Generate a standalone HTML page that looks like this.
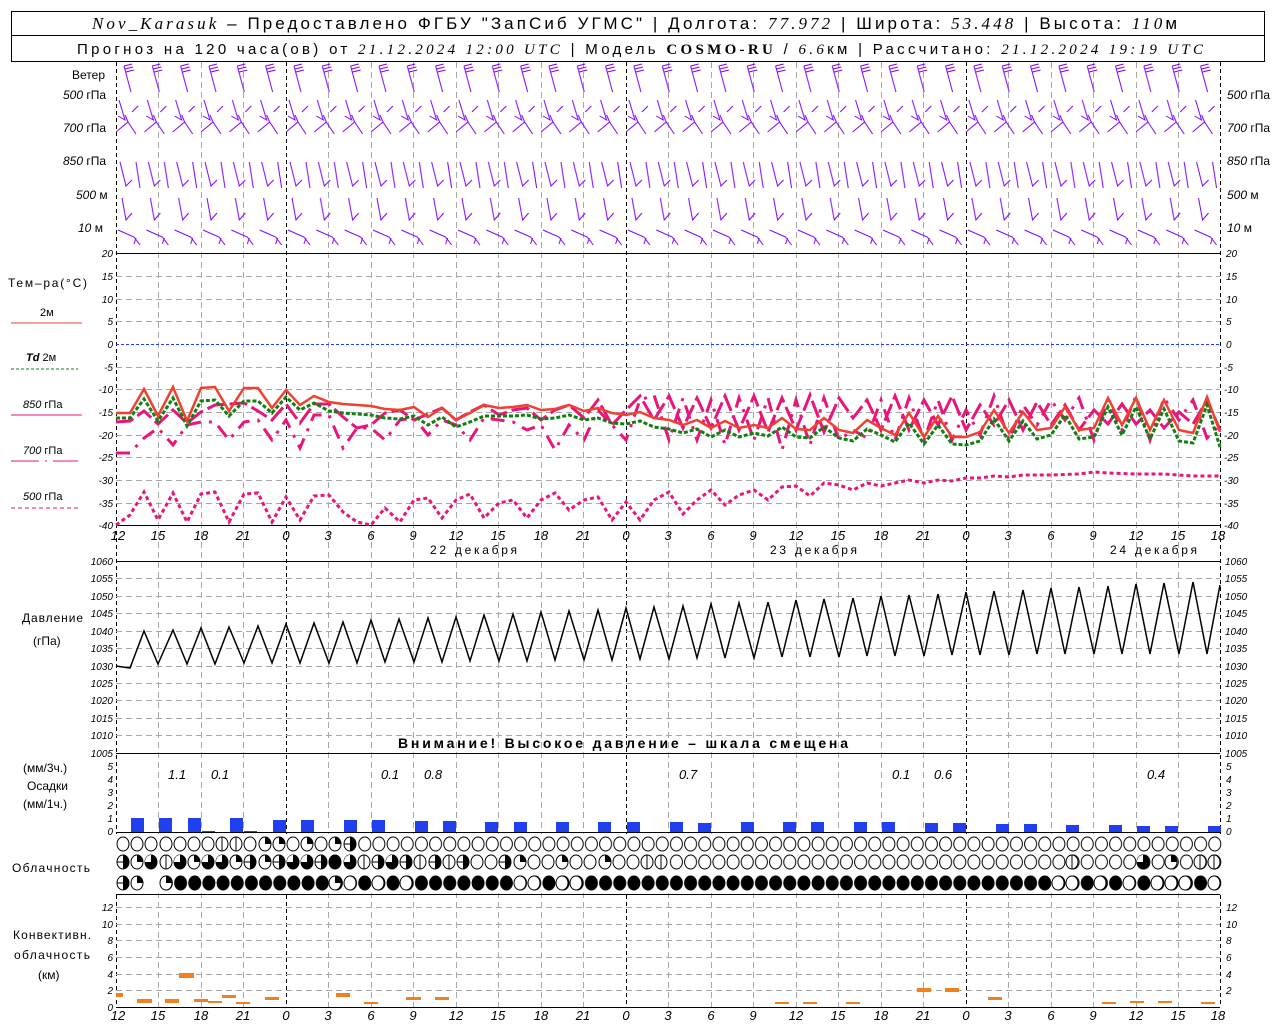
<!DOCTYPE html>
<html><head><meta charset="utf-8"><style>
html,body{margin:0;padding:0;background:#fff;}
svg{display:block;font-family:"Liberation Sans",sans-serif;}
.t{font-size:12px;fill:#000}
.ax{font-size:10px;font-style:italic;fill:#000}
.g{stroke:#a8a8a8;stroke-width:1;stroke-dasharray:6 4;fill:none}
.k{stroke:#000;stroke-width:1;stroke-dasharray:4 3;fill:none}
</style></head><body>
<svg width="1280" height="1024" viewBox="0 0 1280 1024" xmlns="http://www.w3.org/2000/svg">
<defs>
<pattern id="wind" patternUnits="userSpaceOnUse" x="116" y="62" width="28.33" height="190">
<g stroke="#8000ff" stroke-width="1" fill="none">
<path d="M8 4 L15 30 M8 4 L16 2 M9 7 L17 5 M10 10 L18 8"/>
<path d="M3 38 L9 58 L2 54 M16 50 L22 44"/>
<path d="M0 70 L12 60 L20 72 M12 60 L9 53"/>
<path d="M4 100 L10 124 L16 118 M20 100 L24 126"/>
<path d="M6 136 L10 158 L16 151"/>
<path d="M2 168 L18 175 L24 183 M20 176 L18 182"/>
</g></pattern>
<g id="ce"><ellipse rx="6" ry="7" fill="#fff" stroke="#000"/></g>
<g id="cf"><ellipse rx="6" ry="7" fill="#000" stroke="#000"/></g>
<g id="ch"><ellipse rx="6" ry="7" fill="#fff" stroke="#000"/><path d="M0 -7 A6 7 0 0 1 0 7 Z" fill="#000"/><line x1="-6" y1="0" x2="6" y2="0" stroke="#000"/></g>
<g id="cq"><ellipse rx="6" ry="7" fill="#fff" stroke="#000"/><path d="M0 0 L0 -7 A6 7 0 0 1 6 0 Z" fill="#000"/></g>
<g id="ct"><ellipse rx="6" ry="7" fill="#000" stroke="#000"/><path d="M0 0 L-6 0 A6 7 0 0 1 0 -7 Z" fill="#fff"/></g>
<g id="cv"><ellipse rx="6" ry="7" fill="#fff" stroke="#000"/><line x1="0" y1="-7" x2="0" y2="7" stroke="#000"/></g>
<pattern id="pe" patternUnits="userSpaceOnUse" x="116.83" y="836" width="14.167" height="16"><ellipse cx="7.08" cy="8" rx="6" ry="7" fill="#fff" stroke="#000"/></pattern>
<pattern id="pf" patternUnits="userSpaceOnUse" x="116.83" y="875" width="14.167" height="16"><ellipse cx="7.08" cy="8" rx="6" ry="7" fill="#000" stroke="#000"/></pattern>
<pattern id="pe2" patternUnits="userSpaceOnUse" x="116.83" y="854" width="14.167" height="16"><ellipse cx="7.08" cy="8" rx="6" ry="7" fill="#fff" stroke="#000"/></pattern>
</defs>

<!-- header -->
<rect x="11.5" y="11.5" width="1253" height="24" fill="none" stroke="#000"/>
<rect x="11.5" y="35.5" width="1253" height="26" fill="none" stroke="#000"/>
<text x="92" y="29" font-size="17" fill="#000" textLength="1085" lengthAdjust="spacing"><tspan font-family="Liberation Serif" font-style="italic">Nov_Karasuk</tspan> – Предоставлено ФГБУ "ЗапСиб УГМС" | Долгота: <tspan font-family="Liberation Serif" font-style="italic">77.972</tspan> | Широта: <tspan font-family="Liberation Serif" font-style="italic">53.448</tspan> | Высота: <tspan font-family="Liberation Serif" font-style="italic">110</tspan>м</text>
<text x="77" y="54" font-size="15" fill="#000" textLength="1126" lengthAdjust="spacing">Прогноз на 120 часа(ов) от <tspan font-family="Liberation Serif" font-style="italic">21.12.2024 12:00 UTC</tspan>  | Модель <tspan font-family="Liberation Serif" font-weight="bold">COSMO-RU</tspan> / <tspan font-family="Liberation Serif" font-style="italic">6.6</tspan>км | Рассчитано: <tspan font-family="Liberation Serif" font-style="italic">21.12.2024 19:19 UTC</tspan></text>

<!-- vertical grids -->
<path class="g" d="M158.5 62V1007M201.5 62V1007M243.5 62V1007M328.5 62V1007M371.5 62V1007M413.5 62V1007M456.5 62V1007M498.5 62V1007M541.5 62V1007M583.5 62V1007M668.5 62V1007M711.5 62V1007M753.5 62V1007M796.5 62V1007M838.5 62V1007M881.5 62V1007M923.5 62V1007M1008.5 62V1007M1051.5 62V1007M1093.5 62V1007M1136.5 62V1007M1178.5 62V1007"/>
<path class="k" d="M286.5 62V1007M626.5 62V1007M966.5 62V1007M116.5 62V1007M1220.5 62V1007"/>
<rect x="116" y="62" width="1104" height="190" fill="url(#wind)"/>

<!-- wind labels -->
<g class="t" font-size="11">
<text x="72" y="79">Ветер</text>
<text x="63" y="99"><tspan font-style="italic">500</tspan> гПа</text>
<text x="63" y="132"><tspan font-style="italic">700</tspan> гПа</text>
<text x="63" y="165"><tspan font-style="italic">850</tspan> гПа</text>
<text x="76" y="199"><tspan font-style="italic">500</tspan> м</text>
<text x="78" y="232"><tspan font-style="italic">10</tspan>  м</text>
<text x="1227" y="99"><tspan font-style="italic">500</tspan> гПа</text>
<text x="1227" y="132"><tspan font-style="italic">700</tspan> гПа</text>
<text x="1227" y="165"><tspan font-style="italic">850</tspan> гПа</text>
<text x="1227" y="199"><tspan font-style="italic">500</tspan> м</text>
<text x="1227" y="232"><tspan font-style="italic">10</tspan>  м</text>
</g>

<!-- temperature panel -->
<line x1="116" y1="253.5" x2="1220" y2="253.5" stroke="#000"/>
<path class="g" d="M116 276.5H1220M116 299.5H1220M116 321.5H1220M116 367.5H1220M116 389.5H1220M116 412.5H1220M116 435.5H1220M116 457.5H1220M116 480.5H1220M116 503.5H1220"/>
<line x1="116" y1="344.5" x2="1220" y2="344.5" stroke="#2040ff" stroke-dasharray="3 2"/>
<line x1="116" y1="525.5" x2="1220" y2="525.5" stroke="#000"/>
<g class="ax" text-anchor="end">
<text x="113" y="257">20</text><text x="113" y="280">15</text><text x="113" y="303">10</text><text x="113" y="325">5</text><text x="113" y="348">0</text><text x="113" y="371">-5</text><text x="113" y="393">-10</text><text x="113" y="416">-15</text><text x="113" y="439">-20</text><text x="113" y="461">-25</text><text x="113" y="484">-30</text><text x="113" y="507">-35</text><text x="113" y="529">-40</text>
</g>
<g class="ax">
<text x="1226" y="257">20</text><text x="1226" y="280">15</text><text x="1226" y="303">10</text><text x="1226" y="325">5</text><text x="1226" y="348">0</text><text x="1224" y="371">-5</text><text x="1224" y="393">-10</text><text x="1224" y="416">-15</text><text x="1224" y="439">-20</text><text x="1224" y="461">-25</text><text x="1224" y="484">-30</text><text x="1224" y="507">-35</text><text x="1224" y="529">-40</text>
</g>
<g class="t">
<text x="8" y="287" textLength="79" lengthAdjust="spacing">Тем–ра(°С)</text>
<text x="40" y="316" font-size="11">2м</text>
<line x1="11" y1="323" x2="82" y2="323" stroke="#f04030"/>
<text x="26" y="361" font-size="11"><tspan font-style="italic" font-weight="bold">Td</tspan>  2м</text>
<line x1="11" y1="369" x2="78" y2="369" stroke="#108010" stroke-dasharray="3 2"/>
<text x="23" y="408" font-size="11"><tspan font-style="italic">850</tspan> гПа</text>
<line x1="11" y1="415" x2="82" y2="415" stroke="#e8157a"/>
<text x="23" y="454" font-size="11"><tspan font-style="italic">700</tspan> гПа</text>
<line x1="11" y1="461" x2="78" y2="461" stroke="#e8157a" stroke-dasharray="28 6 2 6"/>
<text x="23" y="500" font-size="11"><tspan font-style="italic">500</tspan> гПа</text>
<line x1="11" y1="508" x2="78" y2="508" stroke="#e8157a" stroke-dasharray="4 3"/>
</g>
<polyline fill="none" stroke="#e8157a" stroke-width="3" stroke-dasharray="4 3" points="116,525 130,515 144,492 158,520 173,493 187,522 201,494 215,492 229,522 244,494 258,493 272,522 286,497 300,520 314,496 329,495 343,512 357,522 371,525 385,508 400,522 414,500 428,498 442,518 456,500 470,494 484,518 499,503 513,500 527,518 541,500 555,493 569,510 584,500 598,497 612,520 626,502 640,520 654,500 669,492 683,514 697,500 711,490 725,505 739,495 754,490 768,500 782,487 796,486 810,496 824,483 839,485 853,490 867,483 881,486 895,483 909,480 924,483 938,480 952,481 966,478 980,478 994,476 1009,477 1023,475 1051,475 1079,474 1094,472 1108,473 1136,474 1164,474 1193,476 1220,476"/>
<polyline fill="none" stroke="#e8157a" stroke-width="3" stroke-dasharray="14 8 3 8" points="116,453 130,453 144,438 158,428 173,445 187,425 201,422 215,422 229,440 244,422 258,420 272,440 286,420 300,448 314,415 329,415 343,448 357,428 371,428 385,440 400,420 414,418 428,435 442,420 456,425 470,440 484,418 499,420 513,422 527,430 541,425 555,450 569,425 584,440 598,410 612,425 626,440 640,400 654,395 669,440 683,398 697,440 711,400 725,445 739,398 754,440 768,398 782,450 796,400 810,445 824,398 839,440 853,430 867,438 881,400 895,440 909,398 924,440 938,400 952,440 966,410 980,435 994,396 1009,440 1023,405 1037,425 1051,400 1065,420 1079,398 1094,440 1108,400 1122,430 1136,396 1150,440 1164,398 1179,420 1193,400 1207,438 1220,425"/>
<polyline fill="none" stroke="#e8157a" stroke-width="3" stroke-dasharray="18 5" points="116,422 130,421 144,411 158,424 173,410 187,423 201,412 215,405 229,404 244,403 258,411 272,420 286,404 300,423 314,404 329,404 343,417 357,428 371,425 385,413 400,410 414,420 428,414 442,408 456,420 470,412 484,405 499,415 513,410 527,408 541,420 555,410 569,405 584,418 598,400 612,425 626,410 640,396 654,420 669,396 683,428 697,398 711,428 725,396 739,430 754,396 768,432 782,398 796,430 810,395 824,432 839,398 853,418 867,400 881,430 895,396 909,430 924,400 938,425 952,396 966,430 980,405 994,425 1009,400 1023,430 1037,402 1051,425 1065,405 1079,430 1094,410 1108,424 1122,404 1136,424 1150,410 1164,428 1179,412 1193,424 1207,400 1220,430"/>
<polyline fill="none" stroke="#108010" stroke-width="3" stroke-dasharray="4 2" transform="translate(0,5)" points="116,413 130,413 144,394 158,416 173,393 187,421 201,396 215,395 229,411 244,396 258,396 272,408 286,392 300,405 314,398 329,406 343,408 357,409 371,410 385,413 400,414 414,411 428,420 442,412 456,422 470,417 484,411 499,411 513,411 527,410 541,414 555,413 569,410 584,415 598,413 612,418 626,419 640,416 654,422 669,424 683,428 697,424 711,432 725,425 739,432 754,428 768,431 782,422 796,432 810,433 824,422 839,433 853,436 867,424 881,430 895,437 909,418 924,439 938,420 952,439 966,440 980,436 994,414 1009,436 1023,416 1037,434 1051,430 1065,410 1079,434 1094,432 1108,402 1122,430 1136,402 1150,434 1164,404 1179,436 1193,438 1207,400 1220,442"/>
<polyline fill="none" stroke="#f04030" stroke-width="2.5" points="116,413 130,413 144,389 158,416 173,387 187,421 201,388 215,387 229,411 244,388 258,388 272,408 286,390 300,405 314,396 329,402 343,404 357,405 371,406 385,409 400,410 414,407 428,417 442,408 456,420 470,413 484,405 499,408 513,407 527,405 541,410 555,409 569,405 584,411 598,408 612,413 626,415 640,412 654,418 669,420 683,425 697,420 711,428 725,421 739,428 754,425 768,428 782,418 796,429 810,430 824,418 839,430 853,433 867,420 881,428 895,435 909,413 924,437 938,416 952,437 966,437 980,432 994,410 1009,433 1023,412 1037,430 1051,428 1065,407 1079,430 1094,428 1108,398 1122,425 1136,398 1150,430 1164,400 1179,430 1193,433 1207,397 1220,432"/>
<g font-size="13" font-style="italic" fill="#000" text-anchor="middle">
<text x="118" y="540">12</text><text x="158" y="540">15</text><text x="201" y="540">18</text><text x="243" y="540">21</text><text x="286" y="540">0</text><text x="328" y="540">3</text><text x="371" y="540">6</text><text x="413" y="540">9</text><text x="456" y="540">12</text><text x="498" y="540">15</text><text x="541" y="540">18</text><text x="583" y="540">21</text><text x="626" y="540">0</text><text x="668" y="540">3</text><text x="711" y="540">6</text><text x="753" y="540">9</text><text x="796" y="540">12</text><text x="838" y="540">15</text><text x="881" y="540">18</text><text x="923" y="540">21</text><text x="966" y="540">0</text><text x="1008" y="540">3</text><text x="1051" y="540">6</text><text x="1093" y="540">9</text><text x="1136" y="540">12</text><text x="1178" y="540">15</text><text x="1218" y="540">18</text>
</g>
<g class="t" font-size="12"><text x="430" y="554" textLength="87" lengthAdjust="spacing">22 декабря</text><text x="770" y="554" textLength="87" lengthAdjust="spacing">23 декабря</text><text x="1110" y="554" textLength="87" lengthAdjust="spacing">24 декабря</text></g>

<!-- pressure panel -->
<line x1="116" y1="561.5" x2="1220" y2="561.5" stroke="#000"/>
<path class="g" d="M116 578.5H1220M116 596.5H1220M116 613.5H1220M116 631.5H1220M116 648.5H1220M116 666.5H1220M116 683.5H1220M116 700.5H1220M116 718.5H1220M116 735.5H1220"/>
<line x1="116" y1="753.5" x2="1220" y2="753.5" stroke="#000"/>
<g class="ax" font-size="9" text-anchor="end">
<text x="113" y="565">1060</text><text x="113" y="582">1055</text><text x="113" y="600">1050</text><text x="113" y="617">1045</text><text x="113" y="635">1040</text><text x="113" y="652">1035</text><text x="113" y="670">1030</text><text x="113" y="687">1025</text><text x="113" y="704">1020</text><text x="113" y="722">1015</text><text x="113" y="739">1010</text><text x="113" y="757">1005</text>
</g>
<g class="ax" font-size="9">
<text x="1225" y="565">1060</text><text x="1225" y="582">1055</text><text x="1225" y="600">1050</text><text x="1225" y="617">1045</text><text x="1225" y="635">1040</text><text x="1225" y="652">1035</text><text x="1225" y="670">1030</text><text x="1225" y="687">1025</text><text x="1225" y="704">1020</text><text x="1225" y="722">1015</text><text x="1225" y="739">1010</text><text x="1225" y="757">1005</text>
</g>
<text class="t" x="22" y="622" textLength="61" lengthAdjust="spacing">Давление</text>
<text class="t" x="33" y="645">(гПа)</text>
<polyline fill="none" stroke="#000" stroke-width="1.5" points="116,666 130,668 144,631 158,664 173,630 187,664 201,628 215,664 229,627 244,663 258,626 272,663 286,624 300,663 314,623 329,663 343,622 357,663 371,620 385,662 399,619 414,662 428,618 442,662 456,617 470,661 484,615 499,661 513,614 527,661 541,612 555,660 569,611 584,660 598,610 612,660 626,608 640,659 654,607 669,659 683,606 697,658 711,604 725,658 739,603 754,658 768,602 782,657 796,600 810,657 824,599 839,657 853,598 867,656 881,596 895,656 909,595 924,656 938,594 952,655 966,592 980,655 994,591 1009,655 1023,590 1037,654 1051,588 1065,654 1079,587 1094,654 1108,586 1122,654 1136,584 1150,654 1164,583 1179,654 1193,582 1207,654 1220,585"/>
<text x="398" y="748" font-size="14" font-weight="bold" fill="#000" textLength="450" lengthAdjust="spacing">Внимание! Высокое давление – шкала смещена</text>

<!-- precipitation -->
<line x1="116" y1="832.5" x2="1220" y2="832.5" stroke="#000"/>
<g class="ax" font-size="9" text-anchor="end"><text x="113" y="770">5</text><text x="113" y="783">4</text><text x="113" y="796">3</text><text x="113" y="809">2</text><text x="113" y="822">1</text><text x="113" y="835">0</text></g>
<g class="ax" font-size="9"><text x="1226" y="770">5</text><text x="1226" y="783">4</text><text x="1226" y="796">3</text><text x="1226" y="809">2</text><text x="1226" y="822">1</text><text x="1226" y="835">0</text></g>
<g class="t"><text x="23" y="772">(мм/3ч.)</text><text x="27" y="790">Осадки</text><text x="23" y="808">(мм/1ч.)</text></g>
<g fill="#2040f0">
<rect x="131" y="818" width="13" height="14"/><rect x="159" y="818" width="13" height="14"/><rect x="188" y="818" width="13" height="14"/><rect x="202" y="831" width="13" height="1"/><rect x="230" y="818" width="13" height="14"/><rect x="244" y="831" width="13" height="1"/>
<rect x="273" y="820" width="13" height="12"/><rect x="301" y="820" width="13" height="12"/><rect x="344" y="820" width="13" height="12"/><rect x="372" y="820" width="13" height="12"/><rect x="415" y="821" width="13" height="11"/><rect x="443" y="821" width="13" height="11"/>
<rect x="485" y="822" width="13" height="10"/><rect x="514" y="822" width="13" height="10"/><rect x="556" y="822" width="13" height="10"/><rect x="598" y="822" width="13" height="10"/><rect x="627" y="822" width="13" height="10"/><rect x="670" y="822" width="13" height="10"/><rect x="698" y="823" width="13" height="9"/><rect x="741" y="822" width="13" height="10"/><rect x="783" y="822" width="13" height="10"/><rect x="811" y="822" width="13" height="10"/><rect x="854" y="822" width="13" height="10"/><rect x="882" y="822" width="13" height="10"/>
<rect x="925" y="823" width="13" height="9"/><rect x="953" y="823" width="13" height="9"/><rect x="996" y="824" width="13" height="8"/><rect x="1024" y="824" width="13" height="8"/><rect x="1066" y="825" width="13" height="7"/><rect x="1109" y="825" width="13" height="7"/><rect x="1137" y="826" width="13" height="6"/><rect x="1165" y="826" width="13" height="6"/><rect x="1208" y="826" width="13" height="6"/>
</g>
<g font-size="13" font-style="italic" fill="#000"><text x="168" y="779">1.1</text><text x="211" y="779">0.1</text><text x="381" y="779">0.1</text><text x="424" y="779">0.8</text><text x="679" y="779">0.7</text><text x="892" y="779">0.1</text><text x="934" y="779">0.6</text><text x="1147" y="779">0.4</text></g>

<!-- clouds -->
<rect x="116" y="834" width="1105" height="59" fill="#fff"/>
<text class="t" x="12" y="872" textLength="78" lengthAdjust="spacing">Облачность</text>
<g>
<use href="#ce" x="123" y="844"/><use href="#ce" x="137" y="844"/><use href="#ce" x="151" y="844"/><use href="#ce" x="166" y="844"/><use href="#ce" x="180" y="844"/><use href="#ce" x="194" y="844"/><use href="#ce" x="208" y="844"/><use href="#cv" x="222" y="844"/><use href="#cv" x="236" y="844"/><use href="#ce" x="250" y="844"/><use href="#cq" x="265" y="844"/><use href="#cq" x="279" y="844"/><use href="#ce" x="293" y="844"/><use href="#cq" x="307" y="844"/><use href="#ce" x="321" y="844"/><use href="#cq" x="335" y="844"/><use href="#ch" x="350" y="844"/>
</g>
<rect x="357.7" y="836" width="864" height="16" fill="url(#pe)"/>
<g transform="translate(0,862)">
<use href="#ch" x="123"/><use href="#cq" x="137"/><use href="#ct" x="151"/><use href="#cv" x="166"/><use href="#ct" x="180"/><use href="#cq" x="194"/><use href="#ct" x="208"/><use href="#ct" x="222"/><use href="#cq" x="236"/><use href="#ch" x="250"/><use href="#cq" x="265"/><use href="#ch" x="279"/><use href="#ct" x="293"/><use href="#ct" x="307"/><use href="#ch" x="321"/><use href="#cf" x="335"/><use href="#ct" x="350"/><use href="#cv" x="364"/><use href="#ch" x="378"/><use href="#ct" x="392"/>
<use href="#ch" x="406"/><use href="#cv" x="420"/><use href="#ch" x="435"/><use href="#cv" x="449"/><use href="#ch" x="463"/><use href="#ce" x="477"/><use href="#ce" x="491"/><use href="#ch" x="505"/><use href="#cq" x="520"/><use href="#ce" x="534"/><use href="#ce" x="548"/><use href="#cq" x="562"/><use href="#ce" x="576"/><use href="#ce" x="590"/><use href="#cq" x="605"/><use href="#ce" x="619"/><use href="#ce" x="633"/><use href="#cv" x="647"/><use href="#cv" x="661"/>
</g>
<rect x="669" y="854" width="553" height="16" fill="url(#pe2)"/>
<g transform="translate(0,862)"><use href="#cv" x="1072"/><use href="#ct" x="1143"/><use href="#cq" x="1171"/><use href="#cv" x="1200"/><use href="#cv" x="1214"/></g>
<rect x="159" y="875" width="1063" height="16" fill="url(#pf)"/>
<g transform="translate(0,883)">
<use href="#ch" x="123"/><use href="#cq" x="137"/><use href="#cq" x="166"/><use href="#cq" x="335"/><use href="#ce" x="350"/><use href="#ce" x="378"/><use href="#ce" x="406"/>
<use href="#ce" x="520"/><use href="#ce" x="534"/><use href="#ce" x="562"/><use href="#ce" x="576"/>
<use href="#ce" x="1058"/><use href="#ce" x="1072"/><use href="#ce" x="1100"/><use href="#ce" x="1129"/><use href="#ce" x="1157"/><use href="#ce" x="1171"/><use href="#ce" x="1185"/><use href="#ce" x="1214"/>
</g>

<!-- convective -->
<line x1="116" y1="894.5" x2="1220" y2="894.5" stroke="#000"/>
<path class="g" d="M116 907.5H1220M116 924.5H1220M116 940.5H1220M116 957.5H1220M116 974.5H1220M116 990.5H1220"/>
<line x1="116" y1="1007.5" x2="1220" y2="1007.5" stroke="#000"/>
<g class="ax" font-size="9" text-anchor="end"><text x="113" y="911">12</text><text x="113" y="928">10</text><text x="113" y="944">8</text><text x="113" y="961">6</text><text x="113" y="978">4</text><text x="113" y="994">2</text><text x="113" y="1011">0</text></g>
<g class="ax" font-size="9"><text x="1226" y="911">12</text><text x="1226" y="928">10</text><text x="1226" y="944">8</text><text x="1226" y="961">6</text><text x="1226" y="978">4</text><text x="1226" y="994">2</text></g>
<g class="t"><text x="13" y="939" textLength="78" lengthAdjust="spacing">Конвективн.</text><text x="14" y="959" textLength="76" lengthAdjust="spacing">облачность</text><text x="38" y="979">(км)</text></g>
<g fill="#f08020">
<rect x="116" y="993" width="7" height="4"/><rect x="137" y="999" width="15" height="4"/><rect x="165" y="999" width="14" height="4"/><rect x="179" y="973" width="15" height="5"/><rect x="194" y="999" width="14" height="3"/><rect x="208" y="1001" width="14" height="2"/><rect x="222" y="995" width="14" height="3"/><rect x="236" y="1002" width="14" height="2"/><rect x="265" y="997" width="14" height="3"/><rect x="336" y="993" width="14" height="4"/><rect x="364" y="1002" width="14" height="2"/><rect x="406" y="997" width="15" height="3"/><rect x="435" y="997" width="14" height="3"/>
<rect x="775" y="1002" width="14" height="2"/><rect x="803" y="1002" width="14" height="2"/><rect x="846" y="1002" width="14" height="2"/><rect x="917" y="988" width="14" height="4"/><rect x="945" y="988" width="14" height="4"/><rect x="988" y="997" width="14" height="3"/><rect x="1102" y="1002" width="14" height="2"/><rect x="1130" y="1001" width="14" height="2"/><rect x="1158" y="1001" width="14" height="2"/><rect x="1201" y="1002" width="14" height="2"/>
</g>
<g font-size="13" font-style="italic" fill="#000" text-anchor="middle">
<text x="118" y="1020">12</text><text x="158" y="1020">15</text><text x="201" y="1020">18</text><text x="243" y="1020">21</text><text x="286" y="1020">0</text><text x="328" y="1020">3</text><text x="371" y="1020">6</text><text x="413" y="1020">9</text><text x="456" y="1020">12</text><text x="498" y="1020">15</text><text x="541" y="1020">18</text><text x="583" y="1020">21</text><text x="626" y="1020">0</text><text x="668" y="1020">3</text><text x="711" y="1020">6</text><text x="753" y="1020">9</text><text x="796" y="1020">12</text><text x="838" y="1020">15</text><text x="881" y="1020">18</text><text x="923" y="1020">21</text><text x="966" y="1020">0</text><text x="1008" y="1020">3</text><text x="1051" y="1020">6</text><text x="1093" y="1020">9</text><text x="1136" y="1020">12</text><text x="1178" y="1020">15</text><text x="1218" y="1020">18</text>
</g>
</svg>
</body></html>
